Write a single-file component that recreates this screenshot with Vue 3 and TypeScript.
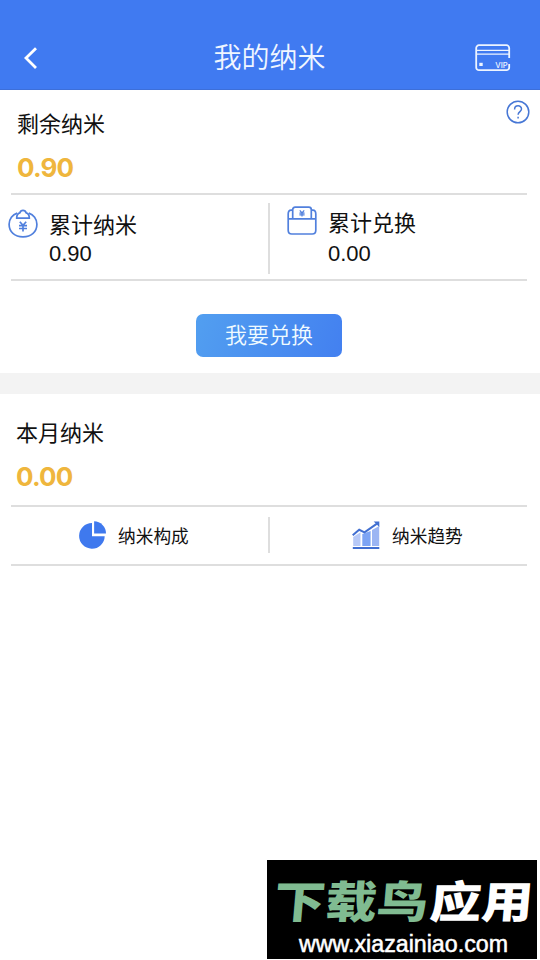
<script setup lang="ts">
interface Total {
  icon: 'purse' | 'wallet'
  label: string
  value: string
}

interface LinkItem {
  icon: 'pie' | 'trend'
  label: string
}

const totals: Total[] = [
  { icon: 'purse', label: '累计纳米', value: '0.90' },
  { icon: 'wallet', label: '累计兑换', value: '0.00' },
]

const links: LinkItem[] = [
  { icon: 'pie', label: '纳米构成' },
  { icon: 'trend', label: '纳米趋势' },
]
</script>

<template>
  <div class="page">
    <header class="header">
      <svg class="back" viewBox="0 0 16 24" aria-hidden="true">
        <path d="M13 2.2 3 12.1 13 22" />
      </svg>
      <h1 class="title">我的纳米</h1>
      <svg class="vip" viewBox="0 0 36 28" aria-hidden="true">
        <path class="stroke" d="M34.2 14V4A2.8 2.8 0 0 0 31.4 1.2H4A2.8 2.8 0 0 0 1.2 4V23.4A2.8 2.8 0 0 0 4 26.2H31.4A2.8 2.8 0 0 0 34.2 23.4V20" />
        <path class="thin" d="M1.5 6.4H34M1.5 10.1H34" />
        <rect class="chip" x="4.3" y="18.8" width="3.4" height="3.2" />
        <text x="20.2" y="23.8" textLength="12.5" lengthAdjust="spacingAndGlyphs">VIP</text>
      </svg>
    </header>

    <section class="balance">
      <div class="summary">
        <div>
          <p class="label">剩余纳米</p>
          <p class="amount">0.90</p>
        </div>
        <svg class="help" viewBox="0 0 24 24" aria-hidden="true">
          <circle cx="12" cy="12" r="10.8" />
          <path d="M8.6 9.4C8.6 4.6 15.5 4.7 15.5 9.1C15.5 11.6 12.1 11.8 12.1 14.8" />
          <path d="M12.1 16.8V18.5" />
        </svg>
      </div>

      <div class="totals">
        <div v-for="item in totals" :key="item.label" class="total" :class="item.icon">
          <svg v-if="item.icon === 'purse'" class="total-icon" viewBox="0 0 30 30" aria-hidden="true">
            <path d="M9.2 4.1C4.5 5.6 1.1 10.2 1.1 15.3C1.1 22.9 6.6 27.8 15 27.8S28.9 22.9 28.9 15.3C28.9 10.2 25.5 5.6 20.8 4.1" />
            <path d="M8.7 9.1H21.3C21.3 6.2 20 4.4 18.2 3.9C17.2.4 12.8.4 11.8 3.9C10 4.4 8.7 6.2 8.7 9.1Z" />
            <path d="M11.8 12.7 15 16.2 18.2 12.7M15 16.2V22.5M11 16.7H19M11 19.5H19" />
          </svg>
          <svg v-else class="total-icon" viewBox="0 0 30 30" aria-hidden="true">
            <path d="M5.5 4.1H4.2Q1.2 4.1 1.2 8V24.3Q1.2 28 4.8 28H25.2Q28.8 28 28.8 24.3V8Q28.8 4.1 25.8 4.1H24.5" />
            <path d="M5.7 12.8V3.7Q5.7 1.2 8.2 1.2H21.8Q24.3 1.2 24.3 3.7V12.8M1.2 12.8H28.8" />
            <path class="fine" d="M12.8 4.4 15 7 17.2 4.4M15 7V10.6M12.4 7.1H17.6M12.4 8.9H17.6" />
          </svg>
          <div class="total-text">
            <p class="label">{{ item.label }}</p>
            <p class="total-value">{{ item.value }}</p>
          </div>
        </div>
      </div>

      <button class="exchange" type="button">我要兑换</button>
    </section>

    <section class="month">
      <p class="label">本月纳米</p>
      <p class="amount">0.00</p>
      <nav class="links">
        <a v-for="item in links" :key="item.label" class="link" :class="item.icon">
          <svg v-if="item.icon === 'pie'" class="link-icon" viewBox="0 0 28 28" aria-hidden="true">
            <path fill="#3f79ee" d="M14 2.1A12.8 12.8 0 1 0 26.7 15.2H14Z" />
            <path fill="#3f79ee" d="M16.1.3V12.4H28A12.1 12.1 0 0 0 16.1.3Z" />
          </svg>
          <svg v-else class="link-icon" viewBox="0 0 28 28" aria-hidden="true">
            <path fill="#b7c9f7" d="M1.2 16 8.5 11.2V24.9H1.2Z" />
            <path fill="#7da4f4" d="M10.3 13 18.6 10V24.9H10.3Z" />
            <path fill="#9bb5f3" d="M20 9 27.2 5V24.9H20Z" />
            <path fill="none" stroke="#416fd1" stroke-width="2" d="M.7 14.3 7.2 8.8 12.5 11.4 25 2.6M.8 27H27.3" />
            <path fill="#416fd1" d="M21.7.5H27.3V6Z" />
          </svg>
          <span>{{ item.label }}</span>
        </a>
      </nav>
    </section>

    <aside class="watermark">
      <svg viewBox="0 0 270 99" role="img">
        <g transform="translate(6 0) skewX(-5)">
          <text class="brand green" x="5" y="58.5" textLength="154" lengthAdjust="spacingAndGlyphs">下载鸟</text>
          <text class="brand white" x="161" y="58.5" textLength="103" lengthAdjust="spacingAndGlyphs">应用</text>
        </g>
        <text class="site" x="32" y="91.5" textLength="209" lengthAdjust="spacingAndGlyphs">www.xiazainiao.com</text>
      </svg>
    </aside>
  </div>
</template>

<style>
body {
  margin: 0;
  background: #fff;
}
</style>

<style scoped>
.page {
  position: relative;
  box-sizing: border-box;
  width: 540px;
  height: 960px;
  overflow: hidden;
  background: #fff;
  color: #111;
  font-family: Inter, "Noto Sans CJK SC", sans-serif;
}

p,
h1 {
  margin: 0;
}

.header {
  box-sizing: border-box;
  display: grid;
  grid-template-columns: 60px 1fr 60px;
  align-items: center;
  height: 90px;
  padding: 27px 29px 1px 23px;
  border-bottom: 1px solid #3d6fd9;
  background: #407af1;
}

.back {
  width: 16px;
  height: 24px;
  fill: none;
  stroke: #fff;
  stroke-width: 2.8;
}

.title {
  padding: 1px 0 0 5px;
  color: #f0f6ff;
  font-size: 28px;
  font-weight: 350;
  line-height: 40px;
  text-align: center;
}

.vip {
  justify-self: end;
  width: 36px;
  height: 28px;
}

.vip path {
  fill: none;
  stroke: #edf4ff;
}

.vip .stroke {
  stroke-width: 1.8;
}

.vip .thin {
  stroke-width: 1.4;
}

.vip .chip,
.vip text {
  fill: #edf4ff;
}

.vip text {
  font-size: 7.5px;
  font-weight: 500;
}

.balance {
  display: flex;
  flex-direction: column;
  height: 283px;
  border-bottom: 21px solid #f3f3f3;
}

.summary {
  box-sizing: border-box;
  display: flex;
  justify-content: space-between;
  height: 103px;
  padding: 18px 10px 0 17px;
}

.label {
  font-size: 22px;
  line-height: 32px;
}

.amount {
  color: #efb63d;
  font-size: 26px;
  font-weight: 700;
  letter-spacing: -0.8px;
  line-height: 32px;
}

.summary .amount {
  margin-top: 12px;
}

.help {
  width: 24px;
  height: 24px;
  margin-top: -8px;
  fill: none;
  stroke: #4777d5;
  stroke-width: 1.5;
}

.totals,
.links {
  display: grid;
  grid-template-columns: 259px 1fr;
  border-top: 2px solid #dedede;
  border-bottom: 2px solid #dedede;
}

.totals {
  box-sizing: border-box;
  height: 88px;
  margin: 0 13px 0 11px;
  padding: 8px 0 5px;
}

.total {
  display: flex;
  align-items: flex-start;
}

.total.purse {
  gap: 11px;
  margin-left: -3px;
  padding-top: 6px;
  border-right: 2px solid #dedede;
}

.total.wallet {
  gap: 11px;
  padding: 3px 0 0 17px;
}

.total-icon {
  width: 30px;
  height: 30px;
  fill: none;
  stroke: #5180dd;
  stroke-width: 1.7;
}

.total.wallet .label {
  margin-top: 1px;
}

.total-icon .fine {
  stroke-width: 1.2;
}

.total-value {
  font-family: "Liberation Sans", sans-serif;
  font-size: 22px;
  line-height: 26px;
}

.wallet .total-value {
  margin-top: 2px;
}

.exchange {
  width: 146px;
  height: 43px;
  margin: 33px 0 0 196px;
  padding: 0;
  border: 0;
  border-radius: 7px;
  background: linear-gradient(110deg, #529ff0, #4380f0);
  color: #f0fbff;
  font-family: inherit;
  font-size: 22px;
  font-weight: 350;
  line-height: 43px;
}

.month {
  padding: 23px 13px 0 11px;
}

.month .label,
.month .amount {
  padding-left: 5px;
}

.month .amount {
  margin-top: 12px;
}

.links {
  box-sizing: border-box;
  height: 61px;
  margin-top: 12px;
  padding: 10px 0 11px;
}

.link {
  display: flex;
  align-items: center;
  gap: 12px;
  font-size: 17.7px;
}

.link.pie {
  padding-left: 67px;
  border-right: 2px solid #dedede;
}

.link.trend {
  padding-left: 82px;
}

.link-icon {
  width: 28px;
  height: 28px;
}

.watermark {
  position: absolute;
  right: 3px;
  bottom: 1px;
  width: 270px;
  height: 99px;
  background: #000;
}

.watermark svg {
  display: block;
  width: 270px;
  height: 99px;
}

.brand {
  font-family: "Noto Sans CJK SC", sans-serif;
  font-size: 44px;
  font-weight: 900;
}

.green {
  fill: #80bb91;
}

.white {
  fill: #fff;
}

.site {
  fill: #fff;
  stroke: #fff;
  stroke-width: 0.5;
  font-family: "Liberation Sans", sans-serif;
  font-size: 23px;
}
</style>
